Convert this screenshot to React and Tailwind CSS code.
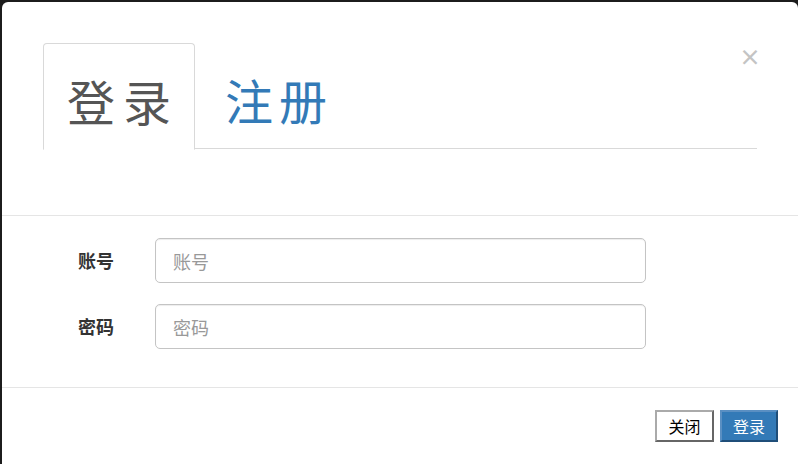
import React from 'react';

const cjk = { fontFamily: '"Noto Sans CJK SC", "Noto Sans", sans-serif' };

// Form row: label + text input
const Field = ({ label }) => (
  <div className="flex items-center">
    <label className="w-[153px] pl-[76px] text-[18px] font-bold text-[#333]">{label}</label>
    <input
      type="text"
      placeholder={label}
      className="w-[491px] h-[45px] px-[17px] text-[18px] text-[#555] placeholder:text-[#999] border border-[#c4c4c4] rounded-[5px] outline-none shadow-[inset_0_1px_1px_rgba(0,0,0,0.075)]"
      style={cjk}
    />
  </div>
);

export default function App() {
  return (
    <div className="w-[798px] h-[464px] bg-[#1c1c1c] pl-[2px] pt-[2px] overflow-hidden" style={cjk}>
      <div className="bg-white rounded-[6px] h-[470px] flex flex-col">
        {/* header with tabs */}
        <div className="relative h-[214px] px-[41px] pt-[41px] border-b border-[#e5e5e5]">
          <button className="absolute top-[42px] right-[37px] text-[22px] leading-none font-bold text-[#c4c4c4]">
            ×
          </button>
          <div className="flex border-b border-[#d9d9d9] h-[106px]">
            <div className="w-[152px] h-[107px] -mb-px border border-[#d9d9d9] border-b-white rounded-t-[4px] bg-white flex items-center pl-[23px] pt-[6px]">
              <span className="text-[48px] leading-none tracking-[8px] text-[#555] font-normal">登录</span>
            </div>
            <div className="flex items-center pl-[30px] pt-[6px]">
              <span className="text-[48px] leading-none tracking-[6px] text-[#337ab7] font-normal">注册</span>
            </div>
          </div>
        </div>

        {/* body */}
        <div className="h-[172px] pt-[22px] border-b border-[#e5e5e5] flex flex-col gap-[21px]">
          <Field label="账号" />
          <Field label="密码" />
        </div>

        {/* footer */}
        <div className="flex justify-end gap-[6px] pt-[22px] pr-[20px]">
          <button className="h-[32px] w-[59px] bg-white text-black text-[16px] border-2 border-t-[#aaa] border-l-[#aaa] border-r-[#666] border-b-[#666]">
            关闭
          </button>
          <button className="h-[32px] w-[58px] bg-[#337ab7] text-white text-[16px] border-2 border-t-[#5a8fc2] border-l-[#5a8fc2] border-r-[#1f4e79] border-b-[#1f4e79]">
            登录
          </button>
        </div>
      </div>
    </div>
  );
}
